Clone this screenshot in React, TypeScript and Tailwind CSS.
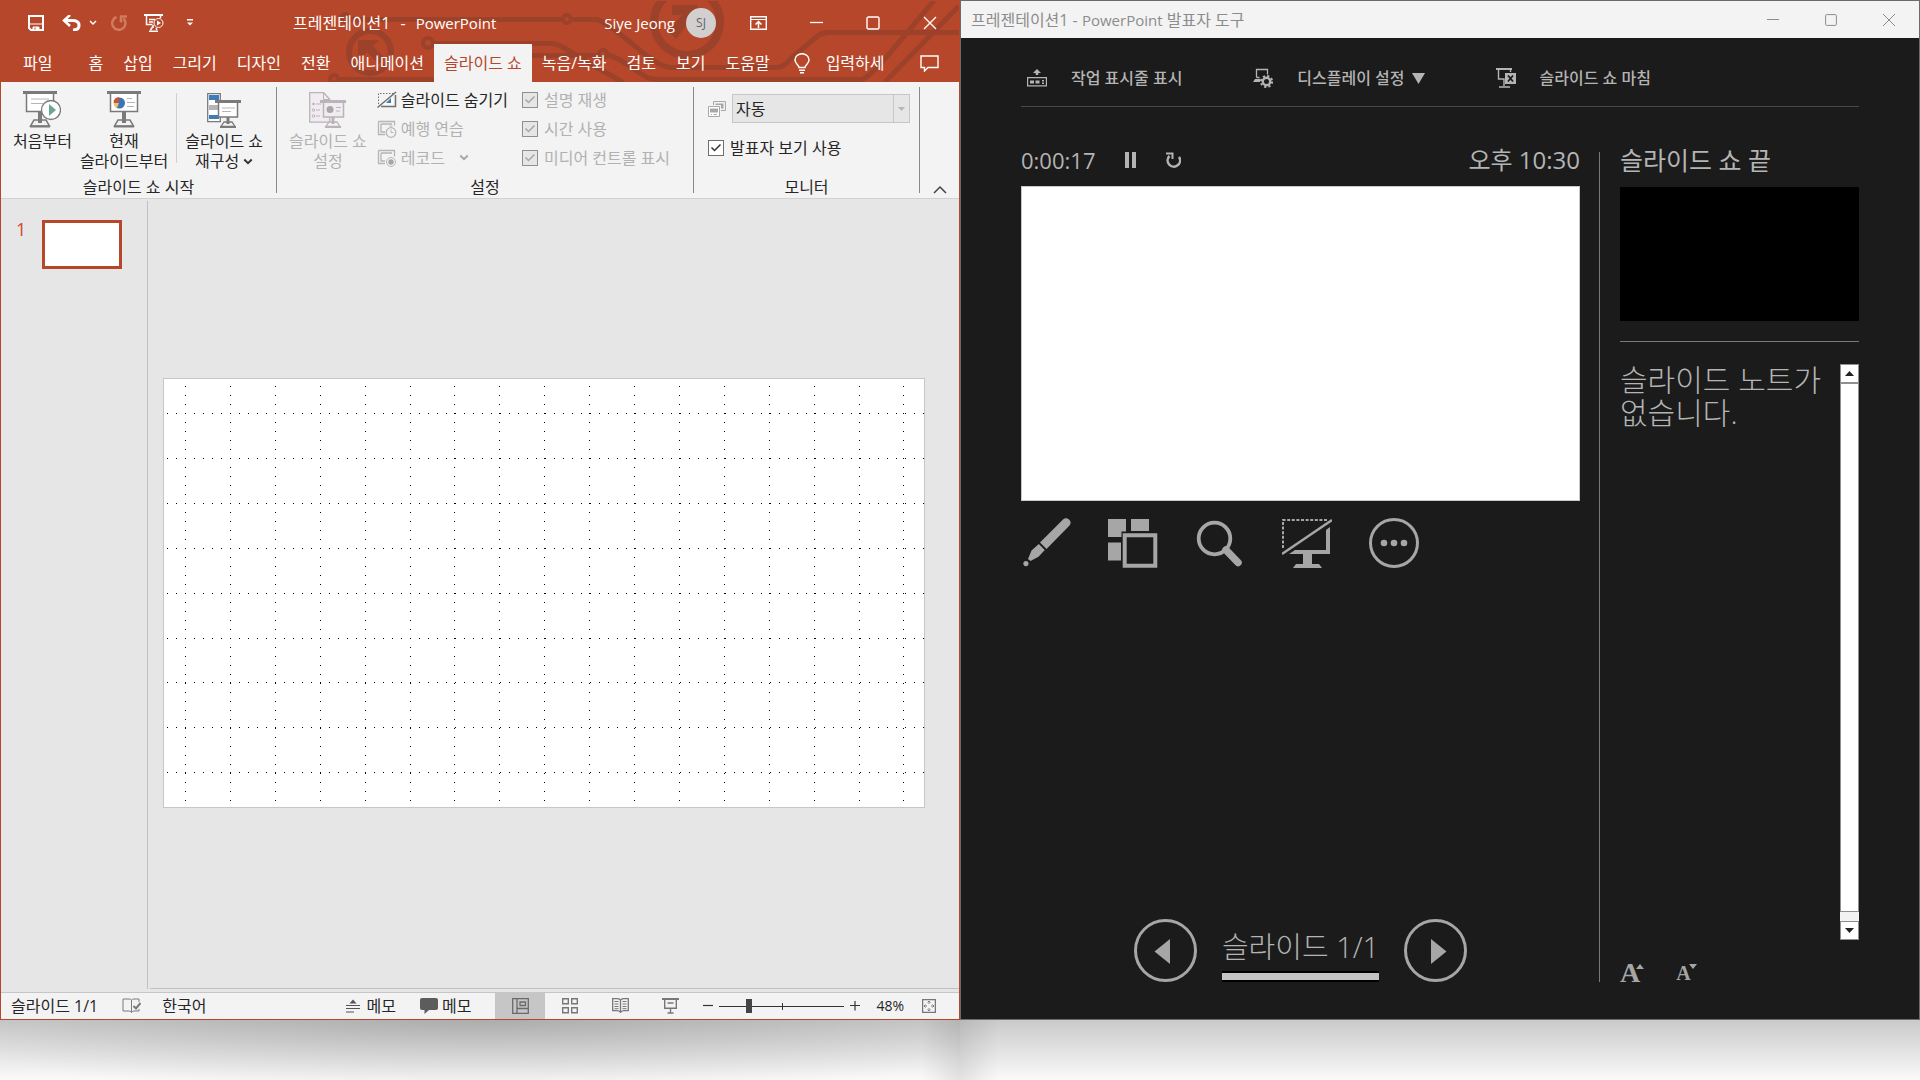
import React from 'react';

const tabsBefore = ['홈', '삽입', '그리기', '디자인', '전환', '애니메이션'];
const tabsAfter = ['녹음/녹화', '검토', '보기', '도움말'];

const columns = Array.from({ length: 17 }, (_, i) => Math.round(21 + i * 44.9) + 0.5);
const rows = Array.from({ length: 9 }, (_, i) => Math.round(34 + i * 44.9) + 0.5);

const HeaderArt = () => (
  <svg className="absolute inset-0 w-full h-full" viewBox="0 0 958 81" preserveAspectRatio="xMaxYMin slice" fill="none" stroke="#9c412a" strokeWidth="5" aria-hidden="true">
    <circle cx="369" cy="51" r="21" strokeWidth="6" />
    <path d="M357 39h21l-6 6 12 12-6 6-12-12-9 9z" fill="#9c412a" stroke="none" />
    <circle cx="344" cy="17" r="4" strokeWidth="4" />
    <path d="M348 18.500h214M572 18.500h24c8 2 20 12 30 20s30 28 45 28h104c8 0 12-6 17-11l25-21c4-2 6-3 10-3h131" />
    <circle cx="566" cy="18" r="4" strokeWidth="4" />
    <circle cx="427" cy="42" r="5" strokeWidth="4" />
    <path d="M432 42.500h120c10 2 20 10 32 17l38 22" />
    <circle cx="333" cy="78" r="4" strokeWidth="4" />
    <path d="M338 78.500h98M531 54.500h66M607 54c16 4 26 16 40 23l8 1.500h206c10-4 16-14 24-22l48-57" />
    <circle cx="602" cy="53" r="4" strokeWidth="4" />
    <path d="M884 81l74-76" />
    <circle cx="686" cy="21" r="33" strokeWidth="8" />
    <path d="M671 4h26v24l-8-8-14 18-8-8 14-16-10 0z" fill="#9c412a" stroke="none" />
  </svg>
);

const SaveIcon = () => (
  <svg width="16" height="16" viewBox="0 0 16 16" fill="none" stroke="#fff">
    <path d="M1 1h14v14H3l-2-2z" strokeWidth="2" />
    <path d="M2 9h12" />
    <path d="M5 15v-3h6v3z" fill="#fff" />
    <path d="M7 12.500v2" stroke="#b7472a" />
  </svg>
);

const UndoIcon = () => (
  <svg width="19" height="16" viewBox="0 0 19 16" fill="none" stroke="#fff" strokeWidth="3">
    <path d="M3 5.500h8c4 0 6 2 6 5s-2 4.500-6 4.500" />
    <path d="M8 0L2 5.500 8 11" strokeWidth="2.500" />
  </svg>
);

const RedoIcon = () => (
  <svg width="17" height="16" viewBox="0 0 17 16" fill="none" stroke="#d07a62" strokeWidth="2.500">
    <path d="M5.500 2A6.600 6.600 0 1 0 12.500 3.500" />
    <path d="M10 7.500V1.500h6" />
  </svg>
);

const PresentIcon = () => (
  <svg width="21" height="18" viewBox="0 0 21 18" fill="none" stroke="#fff">
    <path d="M0 1h19" strokeWidth="2" />
    <path d="M2.500 2v8.500h6M16.500 2v2M5 5.500h6M5 8h4" strokeWidth="1.500" />
    <circle cx="14.500" cy="9" r="4.500" />
    <path d="M13 6.500v5l4-2.500z" fill="#fff" stroke="none" />
    <path d="M9 11v3M5 17.200h9M6.500 16l2-3M13 16l-1-2" strokeWidth="1.500" />
  </svg>
);

const Chevron = ({ color = '#333', size = 8 }: { color?: string; size?: number }) => (
  <svg width={size} height={size} viewBox="0 0 8 8" fill="none" stroke={color} strokeWidth="1.500">
    <path d="M1 2l3 3 3-3" />
  </svg>
);

const FromStartIcon = () => (
  <svg width="38" height="37" viewBox="0 0 38 37" fill="none" stroke="#7a7a7a">
    <path d="M0 1.500h34" strokeWidth="3" />
    <path d="M3.500 3v17.500h27V3" fill="#fff" strokeWidth="1.500" />
    <path d="M8 8h18M8 12.500h12" stroke="#b5b5b5" />
    <path d="M11 29h12l3.500 6h-19z" fill="#f3f3f3" strokeWidth="1.500" />
    <path d="M17 21v11" strokeWidth="4" />
    <path d="M7 35.500h20" strokeWidth="2" />
    <circle cx="28" cy="19" r="9.500" fill="#fff" strokeWidth="1.300" />
    <path d="M26 13v12l7-6z" fill="#6aa78e" stroke="none" />
  </svg>
);

const FromCurrentIcon = () => (
  <svg width="34" height="37" viewBox="0 0 34 37" fill="none" stroke="#7a7a7a">
    <path d="M0 1.500h34" strokeWidth="3" />
    <path d="M3.500 3v17.500h27V3" fill="#fff" strokeWidth="1.500" />
    <circle cx="12.500" cy="12" r="5.500" fill="#3f74b4" stroke="none" />
    <path d="M12 11.500V6a5.500 5.500 0 0 0-5.500 5.500z" fill="#d35230" stroke="none" />
    <path d="M12 12H6.500a5.500 5.500 0 0 0 3.500 5z" fill="#efc36c" stroke="none" />
    <path d="M20 7.500h5M20 11.500h8M20 15.500h7" stroke="#b5b5b5" />
    <path d="M11 29h12l3.500 6h-19z" fill="#f3f3f3" strokeWidth="1.500" />
    <path d="M17 21v11" strokeWidth="4" />
    <path d="M7 35.500h20" strokeWidth="2" />
  </svg>
);

const CustomShowIcon = () => (
  <svg width="34" height="37" viewBox="0 0 34 37" fill="none" stroke="#7a7a7a">
    <path d="M.7 2.700h12.600v28H.7z" fill="#fff" strokeWidth="1.300" />
    <path d="M2 4h10v5H2zM2 24h10v4H2z" fill="#3f7abb" stroke="none" />
    <path d="M2 14h10v5H2z" fill="#b5b5b5" stroke="none" />
    <path d="M8 10.500h26" strokeWidth="3" />
    <path d="M11.500 12v14h19V12" fill="#fff" strokeWidth="1.500" />
    <path d="M15 17h13M15 20.500h9" stroke="#b5b5b5" />
    <path d="M17 31h8l3 4.500H14z" fill="#f3f3f3" strokeWidth="1.300" />
    <path d="M21 26v7" strokeWidth="3" />
    <path d="M13 36h16" strokeWidth="2" />
  </svg>
);

const SetupIcon = () => (
  <svg width="38" height="37" viewBox="0 0 38 37" fill="none" stroke="#b8b4b8">
    <path d="M.7 1.700h14l6 6.500v23H.7z" fill="#f1ecf1" strokeWidth="1.300" />
    <path d="M14.500 2v6.500h6" />
    <path d="M7 13h5M7 19h4M7 25h4" />
    <circle cx="4.500" cy="13" r="1.300" fill="#b8b4b8" stroke="none" />
    <circle cx="4.500" cy="19" r="1.300" />
    <circle cx="4.500" cy="25" r="1.300" />
    <path d="M11 10.500h26" strokeWidth="3" />
    <path d="M14.500 12v14h20V12" fill="#f1ecf1" strokeWidth="1.500" />
    <circle cx="21" cy="18.500" r="3.500" fill="#a9a6a9" stroke="none" />
    <path d="M27 16.500h5M27 20h4" />
    <path d="M20 31h8l3 4.500H17z" fill="#f3f3f3" strokeWidth="1.300" />
    <path d="M24 26v7" strokeWidth="3" />
    <path d="M16 36h16" strokeWidth="2" />
  </svg>
);

const HideIcon = () => (
  <svg width="20" height="18" viewBox="0 0 20 18" fill="none" stroke="#6f6f6f">
    <path d="M1.500 13V2.500H17" strokeDasharray="1.500 1.500" />
    <path d="M4 15.500h14.500V4" strokeWidth="1.500" />
    <path d="M7 13.500h9V6z" fill="#fff" stroke="none" />
    <path d="M9 12l5-5v5z" fill="#3f7abb" stroke="none" />
    <path d="M.5 16.500L19 1" strokeWidth="1.500" />
  </svg>
);

const RehearseIcon = () => (
  <svg width="20" height="18" viewBox="0 0 20 18" fill="none" stroke="#b8b4b8">
    <path d="M1.500 1.500h16v4M1.500 1.500v13H8M4 4h11M4 4v8h4" fill="none" strokeWidth="1.300" />
    <circle cx="14" cy="12.500" r="4.800" fill="#f3f3f3" strokeWidth="1.300" />
    <path d="M14 9.500v3h2.500M12.500 6h3" />
  </svg>
);

const RecordIcon = () => (
  <svg width="20" height="18" viewBox="0 0 20 18" fill="none" stroke="#b8b4b8">
    <path d="M1.500 1.500h16v6M1.500 1.500v13H8M4 4h11M4 4v8h4" strokeWidth="1.300" />
    <circle cx="14" cy="13" r="4.500" fill="#f3f3f3" />
    <circle cx="14" cy="13" r="2.700" fill="#a5a5a5" stroke="none" />
  </svg>
);

const MonitorsIcon = () => (
  <svg width="18" height="18" viewBox="0 0 18 18" fill="none" stroke="#a9a6a9">
    <path d="M5.500 5V1.500h12v9H13" />
    <path d="M7.500 3.500h8v5H13V5H7.500z" fill="#a9a6a9" stroke="none" />
    <path d="M.5 6.500h11v10H.5z" fill="#fff" />
    <path d="M2 8.500h8v4H2z" fill="#a9a6a9" stroke="none" />
    <path d="M3 14.500h1M5.500 14.500H9" />
  </svg>
);

type CheckProps = { id: string; label: string; disabled?: boolean };

const Check = ({ id, label, disabled }: CheckProps) => (
  <div className="flex items-center h-[29px] gap-1.5">
    <span className="relative flex w-4 h-4">
      <input
        id={id}
        type="checkbox"
        defaultChecked
        disabled={disabled}
        className="appearance-none w-4 h-4 border border-[#6e6e6e] bg-white disabled:bg-[#e6e6e6] disabled:border-[#8f8f8f]"
      />
      <svg className="absolute inset-0 pointer-events-none" width="16" height="16" viewBox="0 0 16 16" fill="none" stroke={disabled ? '#a6a6a6' : '#333'} strokeWidth="1.500">
        <path d="M3.500 7.500l3 3 6-6" />
      </svg>
    </span>
    <label htmlFor={id} className={disabled ? 'text-[#b1b1b1]' : 'text-[#262626]'}>{label}</label>
  </div>
);

const BigButton = ({ icon, children, disabled }: { icon: React.ReactNode; children: React.ReactNode; disabled?: boolean }) => (
  <button disabled={disabled} className="flex flex-col items-center gap-[3px] text-[#262626] disabled:text-[#b1b1b1] leading-5 whitespace-nowrap">
    {icon}
    <span>{children}</span>
  </button>
);

const GroupLabel = ({ children }: { children: React.ReactNode }) => (
  <div className="text-center leading-[22px] text-[#262626]">{children}</div>
);

const Divider = () => <div className="w-px shrink-0 my-[5px] bg-[#8a8a8a]" />;

const Ribbon = () => (
  <div className="flex h-[117px] shrink-0 bg-[#f3f3f3] border-b border-[#d0d0d0] whitespace-nowrap">
    <section className="flex flex-col w-[275px] shrink-0">
      <div className="flex flex-1 items-start pt-[9px] pl-3">
        <BigButton icon={<FromStartIcon />}>처음부터</BigButton>
        <div className="ml-2">
          <BigButton icon={<FromCurrentIcon />}>현재<br />슬라이드부터</BigButton>
        </div>
        <div className="w-px h-[70px] mt-[2px] mx-2 bg-[#d0d0d0]" />
        <BigButton icon={<CustomShowIcon />}>
          슬라이드 쇼<br />재구성 <span className="inline-block"><Chevron size={10} /></span>
        </BigButton>
      </div>
      <GroupLabel>슬라이드 쇼 시작</GroupLabel>
    </section>
    <Divider />
    <section className="flex flex-col w-[416px] shrink-0">
      <div className="flex flex-1 items-start pl-3">
        <div className="pt-[9px]">
          <BigButton disabled icon={<SetupIcon />}>슬라이드 쇼<br />설정</BigButton>
        </div>
        <div className="flex flex-col pt-[3px] ml-2.5">
          <button className="flex items-center h-[29px] gap-1 text-[#262626]"><HideIcon />슬라이드 숨기기</button>
          <button disabled className="flex items-center h-[29px] gap-1 text-[#b1b1b1]"><RehearseIcon />예행 연습</button>
          <button disabled className="flex items-center h-[29px] gap-1 text-[#b1b1b1]">
            <RecordIcon />레코드<span className="ml-2.5"><Chevron color="#a6a6a6" size={10} /></span>
          </button>
        </div>
        <div className="flex flex-col pt-[3px] ml-3.5">
          <Check id="narration" label="설명 재생" disabled />
          <Check id="timings" label="시간 사용" disabled />
          <Check id="media" label="미디어 컨트롤 표시" disabled />
        </div>
      </div>
      <GroupLabel>설정</GroupLabel>
    </section>
    <Divider />
    <section className="flex flex-col w-[225px] shrink-0">
      <div className="flex-1 pt-3 pl-[14px] pr-[9px]">
        <div className="flex items-center gap-1.5">
          <MonitorsIcon />
          <div className="relative flex-1">
            <select id="monitor" aria-label="모니터" className="appearance-none block w-full h-[29px] pl-[3px] bg-[#e6e6e6] border border-[#c6c6c6] text-[#262626]">
              <option>자동</option>
            </select>
            <span className="absolute right-0 inset-y-0 w-[17px] flex items-center justify-center border border-[#c6c6c6] pointer-events-none">
              <svg width="7" height="4" viewBox="0 0 7 4" fill="#b5b5b5"><path d="M0 0h7L3.500 4z" /></svg>
            </span>
          </div>
        </div>
        <div className="pt-2.5">
          <Check id="presenter" label="발표자 보기 사용" />
        </div>
      </div>
      <GroupLabel>모니터</GroupLabel>
    </section>
    <Divider />
    <button aria-label="리본 축소" className="self-end mx-auto pb-1">
      <svg width="14" height="9" viewBox="0 0 14 9" fill="none" stroke="#444" strokeWidth="1.500"><path d="M1 8l6-6 6 6" /></svg>
    </button>
  </div>
);

const EditorHeader = () => (
  <header className="relative shrink-0 bg-[#b7472a] text-white whitespace-nowrap">
    <HeaderArt />
    <div className="relative flex items-center h-[43px] pl-[27px] pr-[22px]">
      <button aria-label="저장"><SaveIcon /></button>
      <button aria-label="실행 취소" className="ml-[18px]"><UndoIcon /></button>
      <button aria-label="실행 취소 목록" className="ml-2"><Chevron color="#fff" /></button>
      <button aria-label="다시 실행" className="ml-3.5"><RedoIcon /></button>
      <button aria-label="처음부터 시작" className="ml-4"><PresentIcon /></button>
      <button aria-label="빠른 실행 도구 모음 사용자 지정" className="ml-[22px]">
        <svg width="6" height="7" viewBox="0 0 6 7" fill="#fff"><path d="M0 0h6v1.500H0zM0 3.500h6L3 6.500z" /></svg>
      </button>
      <h1 className="ml-[100px] flex gap-2.5"><span>프레젠테이션1</span><span>-</span><span className="text-[15px]">PowerPoint</span></h1>
      <div className="ml-auto flex items-center">
        <span className="text-[15px]">Siye Jeong</span>
        <span className="ml-[11px] w-[30px] h-[30px] rounded-full bg-[#d2d0ce] text-[#605e72] text-xs flex items-center justify-center">SJ</span>
        <button aria-label="리본 표시 옵션" className="ml-[34px]">
          <svg width="17" height="14" viewBox="0 0 17 14" fill="none" stroke="#fff"><path d="M.7.700h15.600v12.600H.7z" strokeWidth="1.400" /><path d="M1 3.500h15" /><path d="M8.500 12V6M5.500 8.500l3-3 3 3" strokeWidth="1.500" /></svg>
        </button>
        <button aria-label="최소화" className="ml-[43px]">
          <svg width="13" height="14" viewBox="0 0 13 14" stroke="#fff" strokeWidth="1.300"><path d="M0 6.500h13" /></svg>
        </button>
        <button aria-label="최대화" className="ml-[43px]">
          <svg width="14" height="14" viewBox="0 0 14 14" fill="none" stroke="#fff" strokeWidth="1.400"><rect x="1" y="1" width="12" height="12" rx="1.500" /></svg>
        </button>
        <button aria-label="닫기" className="ml-[43px]">
          <svg width="14" height="14" viewBox="0 0 14 14" stroke="#fff" strokeWidth="1.400"><path d="M1 1l12 12M13 1L1 13" /></svg>
        </button>
      </div>
    </div>
    <nav className="relative flex items-center h-[38px] pl-[22px] pr-5">
      <button className="mr-[26px]">파일</button>
      {tabsBefore.map((tab) => (
        <button key={tab} className="px-2.5">{tab}</button>
      ))}
      <button className="px-2.5 h-full bg-[#f3f3f3] text-[#b7472a]">슬라이드 쇼</button>
      {tabsAfter.map((tab) => (
        <button key={tab} className="px-2.5">{tab}</button>
      ))}
      <button className="ml-3.5 flex items-center gap-4">
        <svg width="16" height="21" viewBox="0 0 16 21" fill="none" stroke="#fff" strokeWidth="1.500"><path d="M5 14.500c0-2-4-4-4-7.500a7 6.300 0 0 1 14 0c0 3.500-4 5.500-4 7.500z" /><path d="M5 17.200h6M6 19.700h4" /></svg>
        입력하세
      </button>
      <button aria-label="메모" className="ml-auto">
        <svg width="19" height="17" viewBox="0 0 19 17" fill="none" stroke="#fff" strokeWidth="1.400"><path d="M1 1h17v11.500H8L4.500 16v-3.500H1z" /></svg>
      </button>
    </nav>
  </header>
);

const StatusBar = () => (
  <footer className="flex items-center shrink-0 h-[27px] border-t border-[#c6c6c6] bg-[#f3f3f3] pl-[10px] pr-[23px] text-[#262626] whitespace-nowrap">
    <span>슬라이드 1/1</span>
    <button aria-label="맞춤법 검사" className="ml-6">
      <svg width="19" height="16" viewBox="0 0 19 16" fill="none" stroke="#7a7a7a"><path d="M9.500 14.500V2C8.500 1 7.500 1 6 1H1v12h5c1.500 0 2.500 0 3.500 1.500 1-1.500 2-1.500 3.500-1.500h4v-2M9.500 2c1-1 2-1 3.500-1h4v3" /><path d="M11.500 8l2.500 2.500L18.500 5" strokeWidth="2" /></svg>
    </button>
    <button className="ml-[21px]">한국어</button>
    <div className="ml-auto flex items-center h-full">
      <button className="flex items-center gap-[7px]">
        <svg width="14" height="14" viewBox="0 0 14 14" stroke="#555"><path d="M3.500 4.500h7L7 .500z" fill="#555" stroke="none" /><path d="M0 6.500h14M0 9.500h14M0 13h8" strokeWidth="1.200" /></svg>
        메모
      </button>
      <button className="ml-6 flex items-center gap-1">
        <svg width="18" height="16" viewBox="0 0 18 16" fill="#5c5c5c"><path d="M2 0h14q2 0 2 2v8q0 2-2 2H9l-4.500 4V12H2q-2 0-2-2V2q0-2 2-2z" /></svg>
        메모
      </button>
      <button aria-label="기본" className="ml-6 w-[50px] h-full flex items-center justify-center bg-[#c6c6c6]">
        <svg width="17" height="16" viewBox="0 0 17 16" fill="none" stroke="#6a6a6a" strokeWidth="1.300"><path d="M.7.700h15.600v14.600H.7zM5 1v14M5 10.500h11M8 4h5.500v3.500H8z" /></svg>
      </button>
      <button aria-label="여러 슬라이드" className="w-[50px] h-full flex items-center justify-center">
        <svg width="16" height="16" viewBox="0 0 16 16" fill="none" stroke="#777" strokeWidth="1.400"><path d="M.7.700h5.600v5H.7zM9.700.700h5.600v5H9.700zM.7 9.700h5.600v5H.7zM9.700 9.700h5.600v5H9.700z" /></svg>
      </button>
      <button aria-label="읽기용 보기" className="w-[50px] h-full flex items-center justify-center">
        <svg width="17" height="16" viewBox="0 0 17 16" fill="none" stroke="#777"><path d="M8.500 15V2Q7 .700 5 .700H.700v12H5q2 0 3.500 1.500Q10 12.700 12 12.700h4.300V.700H12Q10 .700 8.500 2" strokeWidth="1.300" /><path d="M2.500 3.500h4M2.500 6h4M2.500 8.500h4M2.500 10.700h4M10.500 3.500h4M10.500 6h4M10.500 8.500h4M10.500 10.700h4" /></svg>
      </button>
      <button aria-label="슬라이드 쇼" className="w-[50px] h-full flex items-center justify-center">
        <svg width="17" height="16" viewBox="0 0 17 16" fill="none" stroke="#777" strokeWidth="1.400"><path d="M0 1h17" strokeWidth="2" /><path d="M2.700 1v9.300h11.600V1M5.500 5h6M8.500 10.500V15M5.500 15h6" /></svg>
      </button>
      <button aria-label="축소" className="ml-2">
        <svg width="10" height="10" viewBox="0 0 10 10" stroke="#333" strokeWidth="1.200"><path d="M0 4.500h10" /></svg>
      </button>
      <div className="relative ml-1.5 w-[125px] h-4">
        <span className="absolute inset-x-0 top-2 h-px bg-[#333]" />
        <span className="absolute left-1/2 top-[5px] h-[7px] w-px bg-[#333]" />
        <input
          type="range"
          aria-label="확대/축소"
          defaultValue={22}
          className="absolute inset-0 w-full h-4 appearance-none bg-transparent [&::-webkit-slider-thumb]:appearance-none [&::-webkit-slider-thumb]:w-1.5 [&::-webkit-slider-thumb]:h-3.5 [&::-webkit-slider-thumb]:bg-[#444]"
        />
      </div>
      <button aria-label="확대" className="ml-1.5">
        <svg width="10" height="10" viewBox="0 0 10 10" stroke="#333" strokeWidth="1.200"><path d="M0 4.500h10M5 0v9.500" /></svg>
      </button>
      <button className="ml-4 text-sm">48%</button>
      <button aria-label="창에 맞춤" className="ml-[18px]">
        <svg width="14" height="14" viewBox="0 0 14 14" fill="none" stroke="#777"><path d="M.6.600h12.800v12.800H.6z" strokeWidth="1.300" /><path d="M7 2v3M5.500 3.500L7 2l1.500 1.500M7 12V9M5.500 10.500L7 12l1.500-1.500M2 7h3M3.500 5.500L2 7l1.500 1.500M12 7H9M10.500 5.500L12 7l-1.500 1.500" strokeWidth=".9" /></svg>
      </button>
    </div>
  </footer>
);

const Editor = () => (
  <div className="flex flex-col flex-1 min-w-0 border border-[#b7472a] bg-[#e6e6e6]">
    <EditorHeader />
    <Ribbon />
    <main className="flex flex-1 min-h-0 pb-[3px]">
      <aside className="w-[147px] shrink-0 mt-[2px] border-r border-[#c0c0c0] pt-[19px] pl-[15px]">
        <button className="flex items-start gap-4 text-[#d04a2b] text-lg leading-[18px]">
          <span>1</span>
          <span className="w-20 h-[49px] bg-white border-[3px] border-[#b7472a]" />
        </button>
      </aside>
      <section className="flex flex-1 items-center ml-0.5 pl-[14px] pr-[35px] pb-0.5 border-b border-[#c0c0c0]">
        <svg className="w-full bg-white outline outline-[#c6c6c6]" viewBox="0 0 760 428" stroke="#000" strokeWidth="1" strokeDasharray="1 8" shapeRendering="crispEdges">
          {columns.map((x) => <path key={x} d={`M${x} 7v420`} />)}
          {rows.map((y) => <path key={y} d={`M3 ${y}h757`} />)}
        </svg>
      </section>
    </main>
    <StatusBar />
  </div>
);

const PresenterToolbar = () => (
  <div className="flex items-center h-[69px] pt-3 shrink-0 border-b border-[#484848] font-medium text-[#b4b4b4] whitespace-nowrap">
    <button className="flex items-center gap-6 ml-1.5">
      <svg width="20" height="18" viewBox="0 0 20 18" fill="none" stroke="#b4b4b4"><path d="M.6 8.600h18.800v8.300H.6z" strokeWidth="1.200" /><path d="M3 11.500h4v3H3zM8.500 11.500h4v3h-4zM15 11h2v1.500h-2zM15 13.500h2V15h-2zM10 0l4 4H6zM8.700 3h2.600v3H8.700z" fill="#b4b4b4" stroke="none" /></svg>
      작업 표시줄 표시
    </button>
    <button className="flex items-center gap-6 ml-[71px]">
      <svg width="20" height="20" viewBox="0 0 20 20" fill="none" stroke="#b4b4b4"><path d="M3.500 9.500v-8h11v5M3.500 9.500h3" strokeWidth="1.300" /><path d="M2 11h5v3H0z" fill="#b4b4b4" stroke="none" /><circle cx="13.500" cy="13.500" r="3.700" strokeWidth="2.400" /><circle cx="13.500" cy="13.500" r="5.600" strokeWidth="2" strokeDasharray="2.200 2.200" /></svg>
      <span className="flex items-center gap-[7px]">
        디스플레이 설정
        <svg width="13" height="11" viewBox="0 0 13 11" fill="#b4b4b4"><path d="M0 0h13L6.500 11z" /></svg>
      </span>
    </button>
    <button className="flex items-center gap-6 ml-[71px]">
      <svg width="20" height="20" viewBox="0 0 20 20" fill="none" stroke="#b4b4b4"><path d="M0 1h16" strokeWidth="2" /><path d="M2.500 2v9H8v7M14.500 2v2M3 19h11" strokeWidth="1.400" /><path d="M9 5h11v11H9z" fill="#b4b4b4" stroke="none" /><path d="M12 7.500l5 6M17 7.500l-5 6" stroke="#1b1b1b" strokeWidth="1.800" /></svg>
      슬라이드 쇼 마침
    </button>
  </div>
);

const PresenterTools = () => (
  <div className="flex items-center gap-[37px] mt-[17px]">
    <button aria-label="펜">
      <svg width="50" height="50" viewBox="0 0 50 50" fill="#a6a6a6"><path d="M42 1.500q3-2.500 6 0t.5 6L25.500 31l-6.500-6.500zM17.800 26l6 6-6.300 6.800L9.500 43 7 41l3.500-8.500zM5 43a2.600 2.600 0 1 1-.1 0z" /></svg>
    </button>
    <button aria-label="모든 슬라이드 보기">
      <svg width="50" height="50" viewBox="0 0 50 50" fill="#a6a6a6"><path d="M0 1h18v12.500h-4.500V19H0zM23 1h18v12H23zM0 24.500h13v18H0z" /><path d="M16.700 17.200h30.600v30.600H16.700z" fill="none" stroke="#a6a6a6" strokeWidth="4" /></svg>
    </button>
    <button aria-label="슬라이드 확대">
      <svg width="50" height="50" viewBox="0 0 50 50" fill="none" stroke="#a6a6a6"><circle cx="19.500" cy="20.500" r="15.800" strokeWidth="3.800" /><path d="M31 32l12 12.500" strokeWidth="7.500" strokeLinecap="round" /></svg>
    </button>
    <button aria-label="화면 검게">
      <svg width="50" height="50" viewBox="0 0 50 50" fill="#a6a6a6"><path d="M1 30V2h44" fill="none" stroke="#a6a6a6" strokeWidth="2" strokeDasharray="3 1.600" /><path d="M0 36L50 2" stroke="#a6a6a6" strokeWidth="2.400" /><path d="M48 9v27H30v10h7l3 4H11l3-4h7V36H7l6-4h31V12z" /></svg>
    </button>
    <button aria-label="추가 옵션">
      <svg width="50" height="50" viewBox="0 0 50 50" fill="#a6a6a6"><circle cx="25" cy="25" r="23.500" fill="none" stroke="#a6a6a6" strokeWidth="3" /><circle cx="15" cy="25" r="3.300" /><circle cx="25" cy="25" r="3.300" /><circle cx="35" cy="25" r="3.300" /></svg>
    </button>
  </div>
);

const Presenter = () => (
  <div className="flex flex-col flex-1 min-w-0 border border-[#6b6b6b] bg-[#1b1b1b] text-[#b4b4b4]">
    <header className="flex items-center shrink-0 h-[37px] pl-2.5 pr-6 bg-[#f3f3f3] text-[#8c8c8c] whitespace-nowrap">
      <h2>프레젠테이션1 - <span className="text-[15px]">PowerPoint</span> 발표자 도구</h2>
      <div className="ml-auto flex items-center gap-[46px]">
        <button aria-label="최소화">
          <svg width="12" height="12" viewBox="0 0 12 12" stroke="#8c8c8c"><path d="M0 5.500h12" /></svg>
        </button>
        <button aria-label="최대화">
          <svg width="12" height="12" viewBox="0 0 12 12" fill="none" stroke="#8c8c8c"><rect x=".6" y=".6" width="10.800" height="10.800" rx="1" /></svg>
        </button>
        <button aria-label="닫기">
          <svg width="12" height="12" viewBox="0 0 12 12" stroke="#8c8c8c"><path d="M0 0l12 12M12 0L0 12" /></svg>
        </button>
      </div>
    </header>
    <div className="flex flex-col flex-1 min-h-0 px-[60px] pb-[37px]">
      <PresenterToolbar />
      <div className="flex flex-1 min-h-0 pt-[45px]">
        <section className="flex flex-col flex-1 min-w-0">
          <div className="flex items-center h-[34px] pb-[18px] text-2xl leading-4">
            <span className="text-[22px]">0:00:17</span>
            <button aria-label="일시 중지" className="ml-[30px]">
              <svg width="11" height="16" viewBox="0 0 11 16" fill="#b4b4b4"><path d="M0 0h4v16H0zM7 0h4v16H7z" /></svg>
            </button>
            <button aria-label="다시 시작" className="ml-[30px]">
              <svg width="15" height="17" viewBox="0 0 15 17" fill="none" stroke="#b4b4b4" strokeWidth="2.500"><path d="M13 5A6.200 6.200 0 1 1 3.500 4" /><path d="M0 1.500h6.500V7" strokeWidth="2" /></svg>
            </button>
            <span className="ml-auto">오후 10:30</span>
          </div>
          <div className="w-full aspect-[559/315] bg-white border border-[#c8c8c8]" />
          <PresenterTools />
          <div className="mt-auto flex items-center justify-center gap-[25px]">
            <button aria-label="이전 슬라이드">
              <svg width="63" height="63" viewBox="0 0 63 63" fill="#a6a6a6"><circle cx="31.500" cy="31.500" r="30" fill="none" stroke="#a6a6a6" strokeWidth="3" /><path d="M36 20v25L20.500 32.500z" /></svg>
            </button>
            <div className="pt-2">
              <div className="text-[29px] font-light leading-10">슬라이드 1/1</div>
              <div className="mt-1 h-[11px] border-y-2 border-black bg-[#c3c3c3]" />
            </div>
            <button aria-label="다음 슬라이드">
              <svg width="63" height="63" viewBox="0 0 63 63" fill="#a6a6a6"><circle cx="31.500" cy="31.500" r="30" fill="none" stroke="#a6a6a6" strokeWidth="3" /><path d="M27 20v25l15.500-12.500z" /></svg>
            </button>
          </div>
        </section>
        <div className="w-px ml-[19px] mr-5 bg-[#787878]" />
        <aside className="flex flex-col w-[239px] shrink-0">
          <h3 className="h-[35px] text-[25px] leading-4">슬라이드 쇼 끝</h3>
          <div className="w-full aspect-[239/134] bg-black" />
          <div className="mt-5 h-px bg-[#787878]" />
          <div className="flex flex-1 min-h-0 mt-[22px] mb-6 justify-between">
            <p className="text-[30px] font-light leading-[33px] -mt-px break-keep">슬라이드 노트가 없습니다.</p>
            <div className="flex flex-col w-[19px] shrink-0 bg-[#f3f3f3]">
              <button aria-label="위로 스크롤" className="h-[19px] flex items-center justify-center bg-white border border-[#8f8f8f]">
                <svg width="9" height="5" viewBox="0 0 9 5" fill="#222"><path d="M0 5h9L4.500 0z" /></svg>
              </button>
              <div className="flex-1 bg-white border border-[#8f8f8f]" />
              <button aria-label="아래로 스크롤" className="mt-[9px] h-[19px] flex items-center justify-center bg-white border border-[#8f8f8f]">
                <svg width="9" height="5" viewBox="0 0 9 5" fill="#222"><path d="M0 0h9L4.500 5z" /></svg>
              </button>
            </div>
          </div>
          <div className="flex items-end gap-8 font-['Liberation_Serif',serif] font-bold text-[#a6a6a6]">
            <button aria-label="글꼴 크기 크게" className="flex items-start text-[28px] leading-[18px]">
              A<svg className="-ml-1" width="8" height="5" viewBox="0 0 8 5" fill="#a6a6a6"><path d="M0 5h8L4 0z" /></svg>
            </button>
            <button aria-label="글꼴 크기 작게" className="flex items-start text-xl leading-[18px]">
              A<svg className="-ml-0.5" width="8" height="5" viewBox="0 0 8 5" fill="#a6a6a6"><path d="M0 0h8L4 5z" /></svg>
            </button>
          </div>
        </aside>
      </div>
    </div>
  </div>
);

export default function App() {
  return (
    <div className="flex flex-col h-screen bg-white text-base leading-6 font-['Open_Sans','Noto_Sans_CJK_KR',sans-serif]">
      <div className="flex flex-1 min-h-0">
        <Editor />
        <Presenter />
      </div>
      {/* window shadows on the desktop */}
      <div className="flex h-[60px] shrink-0 bg-linear-to-b from-[#cacaca] to-[#fafafa]">
        <div className="flex-1 bg-[radial-gradient(ellipse_60%_130%_at_50%_0%,rgba(0,0,0,0.15),transparent),linear-gradient(to_right,transparent_96%,rgba(0,0,0,0.09))]" />
        <div className="flex-1 bg-[linear-gradient(to_right,rgba(0,0,0,0.09),transparent_4%)]" />
      </div>
    </div>
  );
}
